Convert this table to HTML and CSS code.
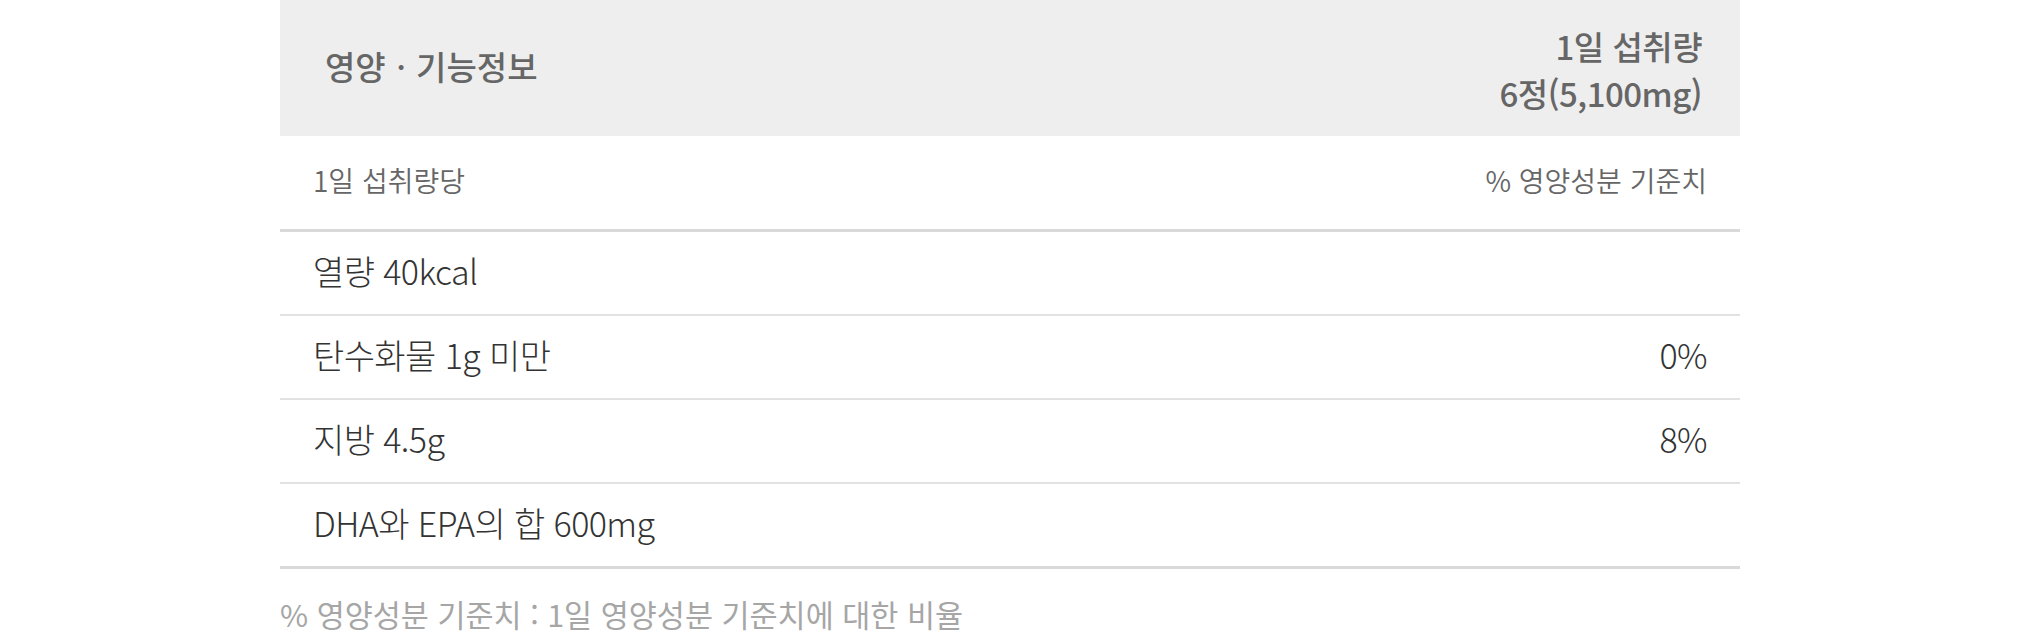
FILE: index.html
```html
<!DOCTYPE html>
<html lang="ko">
<head>
<meta charset="utf-8">
<title>영양ㆍ기능정보</title>
<link rel="stylesheet" href="styles.css">
</head>
<body>
<div class="wrap">
  <div class="table">
    <div class="head">
      <div class="head-title">영양ㆍ기능정보</div>
      <div class="head-amount">1일 섭취량<br>6정(5,100mg)</div>
    </div>
    <div class="sub">
      <span>1일 섭취량당</span>
      <span>% 영양성분 기준치</span>
    </div>
    <div class="row"><span>열량 40kcal</span><span></span></div>
    <div class="row"><span>탄수화물 1g 미만</span><span>0%</span></div>
    <div class="row"><span>지방 4.5g</span><span>8%</span></div>
    <div class="row last"><span>DHA와 EPA의 합 600mg</span><span></span></div>
  </div>
  <p class="note">% 영양성분 기준치 : 1일 영양성분 기준치에 대한 비율</p>
</div>
</body>
</html>
```
FILE: styles.css
```css
html, body {
  margin: 0;
  padding: 0;
  background: #ffffff;
}
body {
  font-family: "Noto Sans CJK KR", "Noto Sans", sans-serif;
  color: #333333;
}
.wrap {
  width: 1460px;
  margin: 0 auto;
}
.table {
  display: flex;
  flex-direction: column;
}
.head {
  height: 136px;
  background: #eeeeee;
  display: flex;
  justify-content: space-between;
  align-items: center;
  padding: 0 38px 0 45px;
  box-sizing: border-box;
  color: #666666;
  font-weight: 500;
}
.head-title {
  font-size: 33px;
  padding-bottom: 4px;
}
.head-amount {
  font-size: 33px;
  line-height: 47px;
  text-align: right;
  letter-spacing: -0.5px;
  padding-top: 4px;
}
.sub {
  height: 96px;
  display: flex;
  justify-content: space-between;
  align-items: center;
  padding: 0 33px 5px;
  box-sizing: border-box;
  border-bottom: 3px solid #d9d9d9;
  font-size: 28px;
  font-weight: 350;
  color: #666666;
}
.row {
  height: 84px;
  display: flex;
  justify-content: space-between;
  align-items: center;
  padding: 0 33px 5px;
  box-sizing: border-box;
  border-bottom: 2px solid #e2e2e2;
  font-size: 34px;
  font-weight: 300;
  color: #333333;
  letter-spacing: -0.6px;
}
.row.last {
  height: 85px;
  border-bottom: 3px solid #d9d9d9;
}
.note {
  margin: 27px 0 0;
  font-size: 30.5px;
  line-height: 36px;
  color: #a6a6a6;
}
```
